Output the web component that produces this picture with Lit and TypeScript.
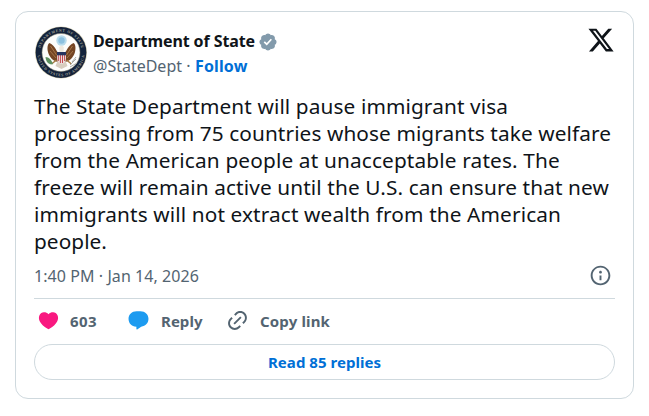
import { LitElement, html, css, svg } from "lit";
import { customElement, property } from "lit/decorators.js";

/** One run of text whose tracking is tuned so that it fills a given width. */
@customElement("fit-text")
class FitText extends LitElement {
  @property({ type: Number }) width = 0;
  @property() text = "";

  static styles = css`
    :host { display: inline-block; white-space: pre; }
    .run { display: inline-block; }
  `;

  firstUpdated() {
    const run = this.renderRoot.querySelector<HTMLElement>(".run")!;
    const natural = run.getBoundingClientRect().width;
    run.style.letterSpacing = `${(this.width - natural) / this.text.length}px`;
  }

  render() {
    return html`<span class="run">${this.text}</span>`;
  }
}

const lines: [string, number][] = [
  ["The State Department will pause immigrant visa", 474],
  ["processing from 75 countries whose migrants take welfare", 577],
  ["from the American people at unacceptable rates. The", 526],
  ["freeze will remain active until the U.S. can ensure that new", 575],
  ["immigrants will not extract wealth from the American", 527],
  ["people.", 73],
];

const seal = svg`
  <defs>
    <path id="topArc" d="M6.200 26.500a20.800 20.800 0 0 1 41.600 0"/>
    <path id="lowArc" d="M3.300 26.500a23.700 23.700 0 0 0 47.400 0"/>
  </defs>
  <circle cx="27" cy="26.500" r="26" fill="#d9d2b4"/>
  <circle cx="27" cy="26.500" r="25.400" fill="#14233c"/>
  <text class="ring"><textPath href="#topArc" startOffset="50%" text-anchor="middle" textLength="56">DEPARTMENT OF STATE</textPath></text>
  <text class="ring"><textPath href="#lowArc" startOffset="50%" text-anchor="middle" textLength="68">UNITED STATES OF AMERICA</textPath></text>
  <circle cx="27" cy="26.500" r="19" fill="#fdfdfb" stroke="#8e8a70" stroke-width=".5"/>
  <circle cx="27.500" cy="14.500" r="5.200" fill="#b9dcec"/>
  <circle cx="27.500" cy="14.500" r="3.200" fill="#8dc1df"/>
  <path d="M25 27c-3-1-3-7-9.500-10-2 1-2.500 5-1.500 9s4 8 8 9.500l3 .5z" fill="#754523"/>
  <path d="M30 27c3-1 3-7 9.500-10 2 1 2.500 5 1.500 9s-4 8-8 9.500l-3 .5z" fill="#754523"/>
  <path d="M16.500 20l6 9M16 25l6 7M38.500 20l-6 9M39 25l-6 7" stroke="#b88a58" stroke-width=".7"/>
  <path d="M24 34l-2.500 6 6 3 6-3-2.500-6z" fill="#d7cdbf"/>
  <path d="M22.500 34l-5 4M32.500 34l5 4" stroke="#a67b42" stroke-width="1.500"/>
  <path d="M11.500 31c3.500 0 6 3 7.500 7-3.500 1-7-1-7.500-7z" fill="#5e9160"/>
  <path d="M36 39l6-6M36 41l7-4M38 36l4-5" stroke="#a3a39d" stroke-width=".9"/>
  <path d="M25.200 21.500c.5-2.200 4-2.200 4.600 0l-.3 5h-4z" fill="#efe9de"/>
  <path d="M23 26h9v6.500c0 3-2 4.500-4.500 5.500-2.500-1-4.500-2.500-4.500-5.500z" fill="#f0dede"/>
  <path d="M24.300 29v6M26.400 29v8M28.500 29v8M30.600 29v6" stroke="#c0484e" stroke-width="1"/>
  <path d="M23 26h9v3.300h-9z" fill="#26345f"/>
`;

@customElement("app-root")
class AppRoot extends LitElement {
  static styles = css`
    :host {
      display: block;
      box-sizing: border-box;
      height: 416px;
      padding: 11px 15px 0;
      background: #fff;
      color: #0f1419;
      font-family: "Noto Sans", "Open Sans", sans-serif;
    }
    svg { display: block; flex: none; }
    .card {
      box-sizing: border-box;
      height: 388px;
      padding: 14px 18px 0;
      border: 1px solid #cfd9de;
      border-radius: 13px;
      display: flex;
      flex-direction: column;
    }
    .header { display: flex; height: 67px; }
    .avatar { width: 53px; height: 53px; }
    .ring { font: 700 3.700px "Liberation Serif", serif; fill: #a5a698; }
    .who { flex: 1; padding: 3px 0 0 6px; }
    .row { display: flex; align-items: center; height: 25px; line-height: 25px; font-size: 16px; }
    .name { font-weight: 700; }
    .badge { width: 20px; height: 20px; margin: 0 0 0 2.500px; fill: #829aab; }
    .handle, .dot { color: #536471; }
    .dot { width: 13px; text-align: center; }
    .follow { color: #006fd6; font-weight: 700; }
    .logo { width: 28px; height: 28px; fill: #0f1419; }
    .body { font-size: 20.800px; line-height: 27px; height: 162px; }
    .body fit-text { display: block; height: 27px; }
    .meta {
      display: flex; align-items: center; justify-content: space-between;
      box-sizing: border-box; height: 44px; padding-bottom: 2px;
      border-bottom: 1px solid #cfd9de;
      color: #536471; font-size: 16px;
    }
    .meta svg { width: 23px; height: 23px; margin-right: 2.700px; fill: #536471; }
    .actions {
      display: flex; align-items: center;
      box-sizing: border-box; height: 45px; padding-bottom: 2px;
      color: #536471; font-size: 15px; font-weight: 700;
    }
    .actions svg { width: 23px; height: 23px; }
    .action { display: flex; align-items: center; }
    .like { width: 90.500px; padding-left: 2.500px; gap: 10.500px; }
    .reply { width: 99px; gap: 11px; }
    .copy { gap: 11px; }
    .heart { fill: #f91880; }
    .bubble { fill: #1d9bf0; }
    .link { fill: #536471; }
    .more {
      box-sizing: border-box; height: 36px;
      display: flex; align-items: center; justify-content: center;
      border: 1px solid #cfd9de; border-radius: 18px;
      color: #006fd6; font-size: 15px; font-weight: 700;
    }
  `;

  render() {
    return html`
      <article class="card">
        <header class="header">
          <svg class="avatar" viewBox="0 0 53 53">${seal}</svg>
          <div class="who">
            <div class="row">
              <fit-text class="name" text="Department of State" .width=${162}></fit-text>
              <svg class="badge" viewBox="0 0 22 22">
                <path d="M20.396 11c-.018-.646-.215-1.275-.57-1.816-.354-.54-.852-.972-1.438-1.246.223-.607.27-1.264.14-1.897-.131-.634-.437-1.218-.882-1.687-.47-.445-1.053-.75-1.687-.882-.633-.13-1.290-.083-1.897.14-.273-.587-.704-1.086-1.245-1.440S11.647 1.620 11 1.604c-.646.017-1.273.213-1.813.568s-.969.854-1.240 1.440c-.608-.223-1.267-.272-1.902-.14-.635.130-1.220.436-1.690.882-.445.470-.749 1.055-.878 1.688-.130.633-.080 1.290.144 1.896-.587.274-1.087.705-1.443 1.245-.356.540-.555 1.170-.574 1.817.020.647.218 1.276.574 1.817.356.540.856.972 1.443 1.245-.224.606-.274 1.263-.144 1.896.130.634.433 1.218.877 1.688.470.443 1.054.747 1.687.878.633.132 1.290.084 1.897-.136.274.586.705 1.084 1.246 1.439.540.354 1.170.551 1.816.569.647-.016 1.276-.213 1.817-.567s.972-.854 1.245-1.440c.604.239 1.266.296 1.903.164.636-.132 1.220-.447 1.680-.907.460-.460.776-1.044.908-1.681s.075-1.299-.165-1.903c.586-.274 1.084-.705 1.439-1.246.354-.540.551-1.170.569-1.816zM9.662 14.850l-3.429-3.428 1.293-1.302 2.072 2.072 4.400-4.794 1.347 1.246z"/>
              </svg>
            </div>
            <div class="row">
              <fit-text class="handle" text="@StateDept" .width=${89}></fit-text>
              <span class="dot">·</span>
              <fit-text class="follow" text="Follow" .width=${52.5}></fit-text>
            </div>
          </div>
          <svg class="logo" viewBox="0 0 24 24">
            <path d="M18.244 2.250h3.308l-7.227 8.260 8.502 11.240H16.170l-5.214-6.817L4.990 21.750H1.680l7.730-8.835L1.254 2.250H8.080l4.713 6.231zm-1.161 17.520h1.833L7.084 4.126H5.117z"/>
          </svg>
        </header>
        <div class="body">
          ${lines.map(([t, w]) => html`<fit-text .text=${t} .width=${w}></fit-text>`)}
        </div>
        <div class="meta">
          <fit-text text="1:40 PM · Jan 14, 2026" .width=${165}></fit-text>
          <svg viewBox="0 0 24 24">
            <path d="M13.500 8.500c0 .83-.67 1.500-1.500 1.500s-1.500-.67-1.500-1.500S11.170 7 12 7s1.500.67 1.500 1.500zM13 17v-5h-2v5h2zm-1 5.250c5.660 0 10.250-4.590 10.250-10.250S17.660 1.750 12 1.750 1.750 6.340 1.750 12 6.340 22.250 12 22.250zM20.250 12c0 4.560-3.690 8.250-8.250 8.250S3.750 16.560 3.750 12 7.440 3.750 12 3.750s8.250 3.690 8.250 8.250z"/>
          </svg>
        </div>
        <div class="actions">
          <div class="action like">
            <svg class="heart" viewBox="0 0 24 24">
              <path d="M20.884 13.190c-1.351 2.480-4.001 5.120-8.379 7.670l-.503.300-.504-.300c-4.379-2.550-7.029-5.190-8.382-7.670-1.360-2.500-1.410-4.860-.514-6.670.887-1.790 2.647-2.910 4.601-3.010 1.651-.090 3.368.560 4.798 2.010 1.429-1.450 3.146-2.100 4.796-2.010 1.954.100 3.714 1.220 4.601 3.010.896 1.810.846 4.170-.514 6.670z"/>
            </svg>
            <fit-text text="603" .width=${27}></fit-text>
          </div>
          <div class="action reply">
            <svg class="bubble" viewBox="0 0 24 24">
              <path d="M14 2.300c4.900 0 8.400 3.300 8.400 7.900 0 4.500-2.900 7.600-7.600 8.200l-4.200 2.900c-.4.200-.8 0-.8-.4v-2.400c-5.200-.2-8.200-3.700-8.200-8.300 0-4.600 3.500-7.900 8.400-7.900z"/>
            </svg>
            <fit-text text="Reply" .width=${41.5}></fit-text>
          </div>
          <div class="action copy">
            <svg class="link" viewBox="0 0 24 24">
              <path d="M18.360 5.640c-1.950-1.960-5.110-1.960-7.070 0L9.880 7.050 8.460 5.640l1.420-1.420c2.730-2.730 7.160-2.730 9.900 0 2.730 2.740 2.730 7.170 0 9.900l-1.420 1.420-1.410-1.420 1.410-1.410c1.960-1.960 1.960-5.120 0-7.070zm-2.120 3.530l-7.070 7.070-1.410-1.410 7.070-7.070 1.410 1.410zm-12.020.710l1.420-1.420 1.410 1.420-1.410 1.410c-1.960 1.960-1.960 5.120 0 7.070 1.950 1.960 5.110 1.960 7.070 0l1.410-1.410 1.420 1.410-1.420 1.420c-2.730 2.730-7.160 2.730-9.900 0-2.730-2.740-2.730-7.170 0-9.900z"/>
            </svg>
            <fit-text text="Copy link" .width=${70}></fit-text>
          </div>
        </div>
        <div class="more"><fit-text text="Read 85 replies" .width=${113}></fit-text></div>
      </article>
    `;
  }
}
